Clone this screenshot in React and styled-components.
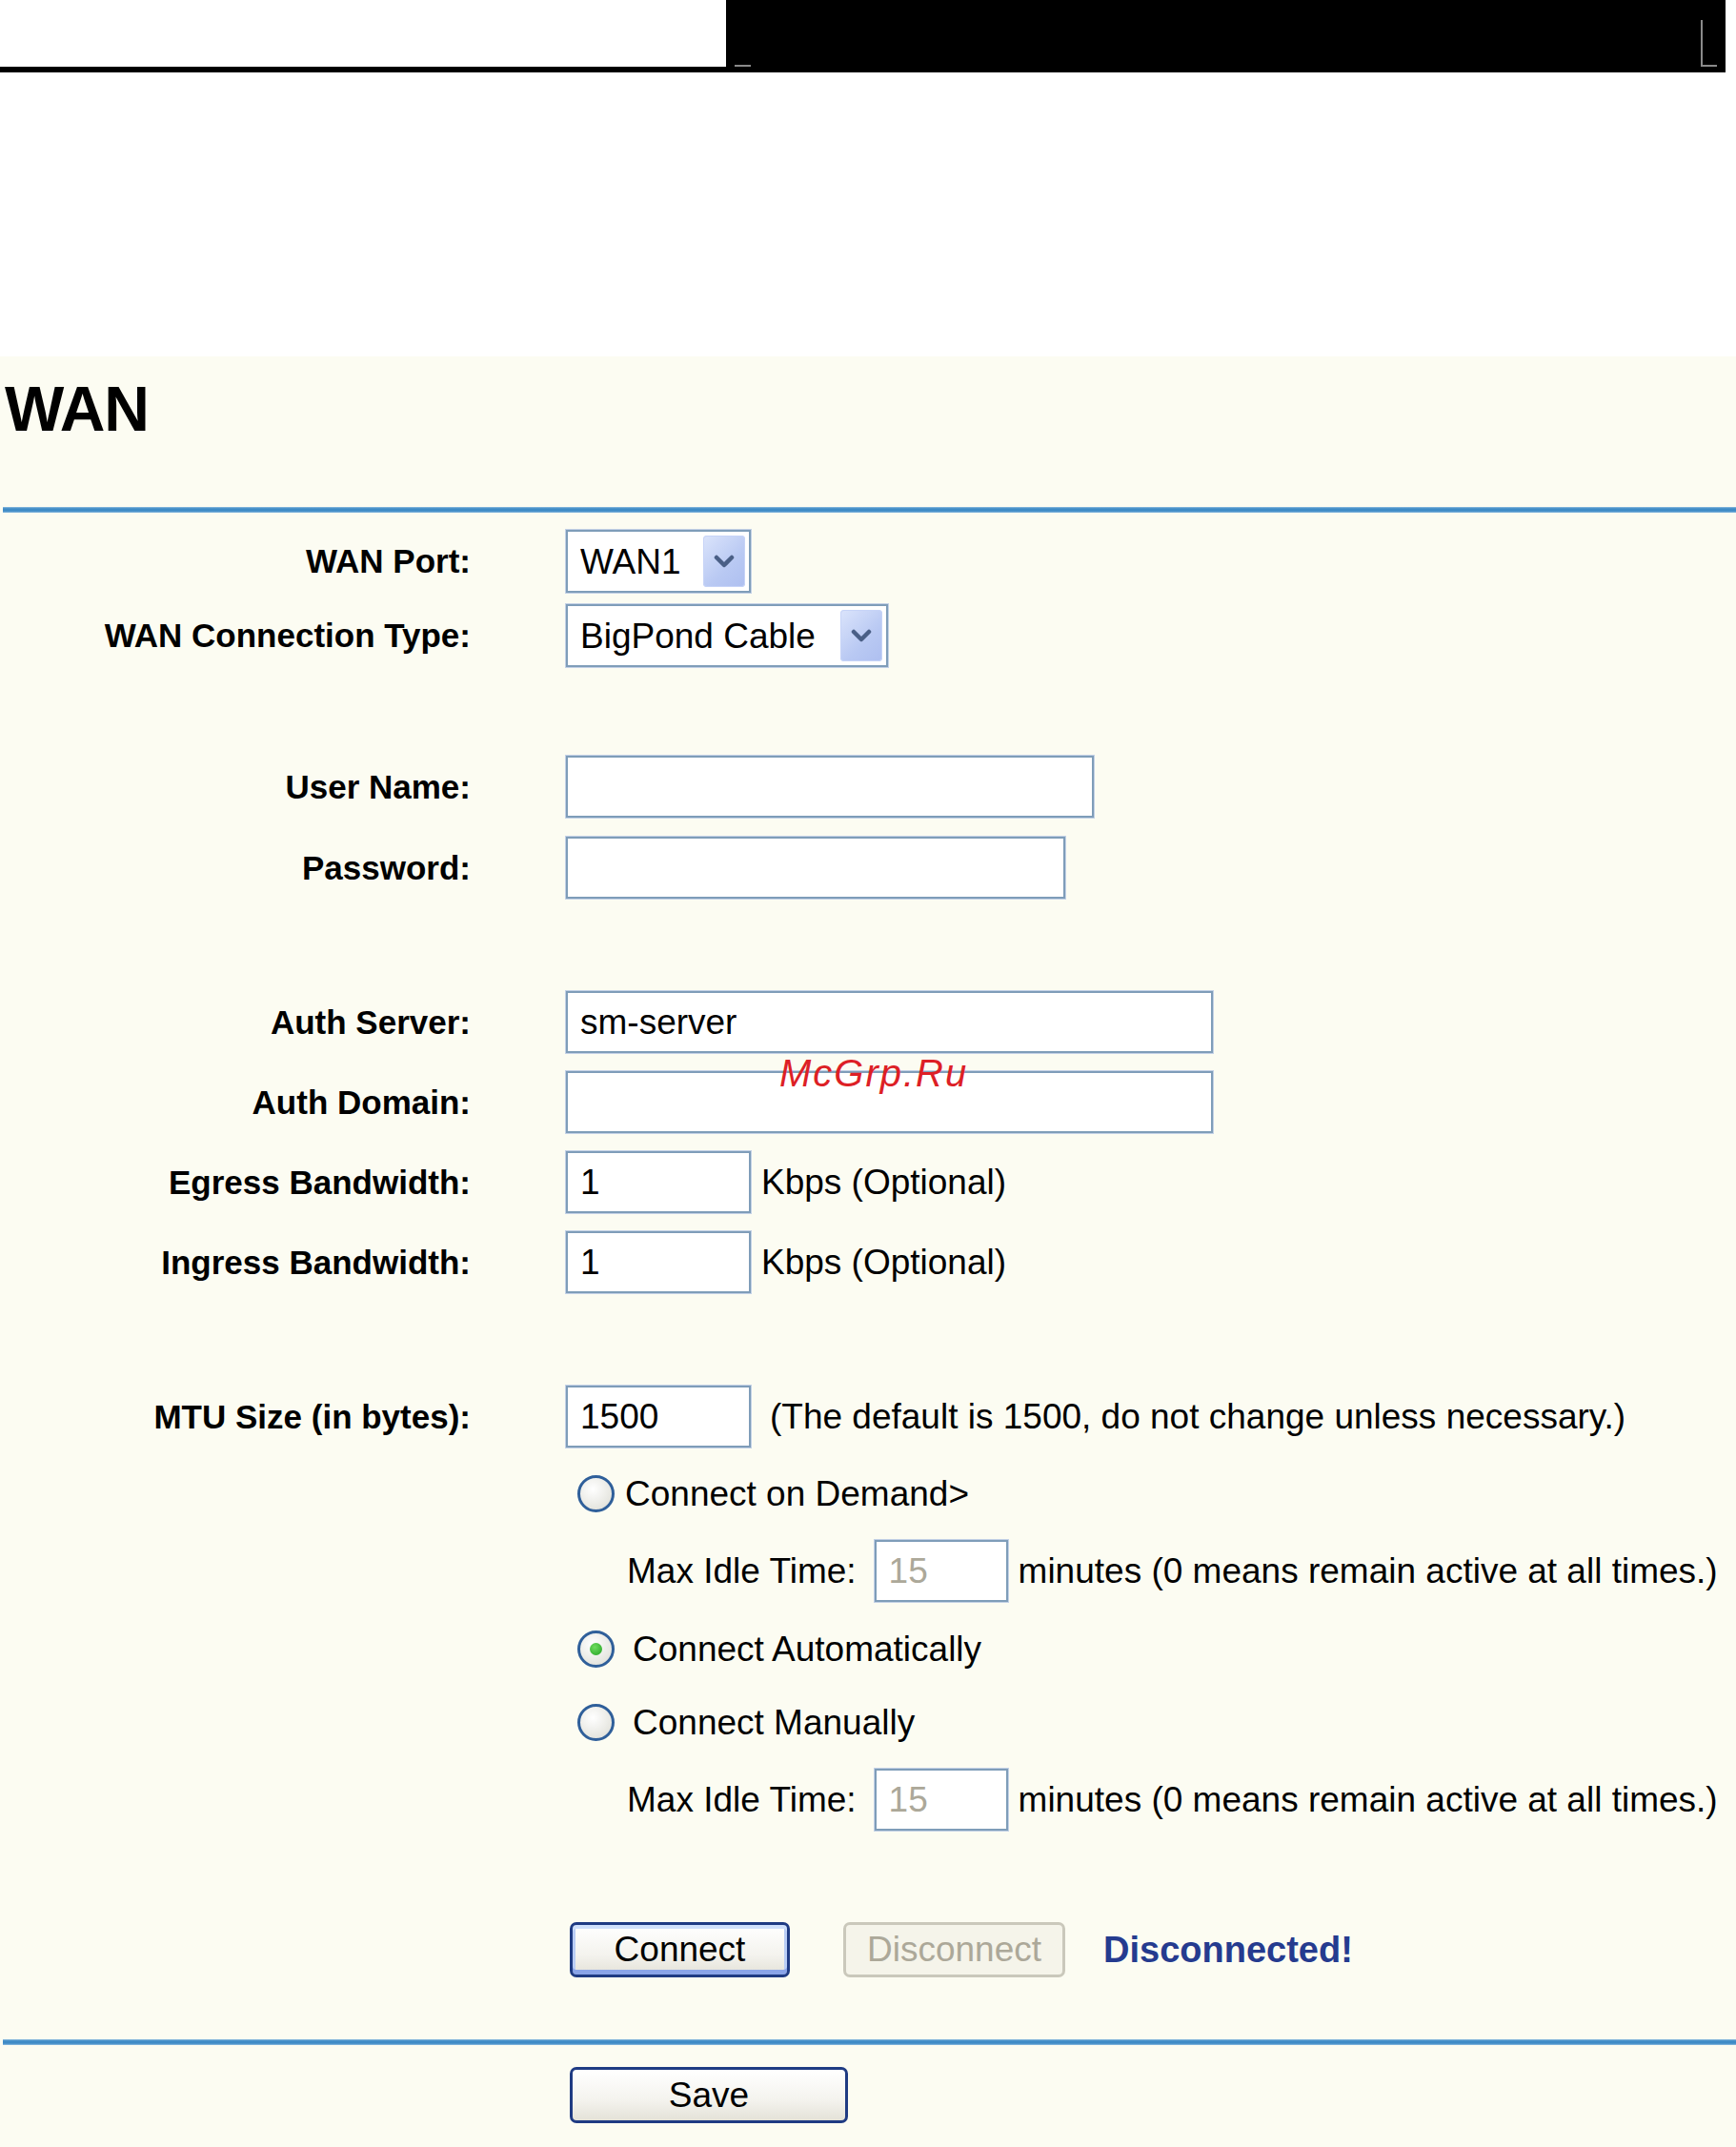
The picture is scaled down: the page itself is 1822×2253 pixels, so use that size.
import styled, { createGlobalStyle } from "styled-components";

const GlobalStyle = createGlobalStyle`
  html, body {
    margin: 0;
    padding: 0;
    background: #ffffff;
  }
  body {
    font-family: "Liberation Sans", Arial, sans-serif;
    color: #000;
  }
`;

const FONT = `"Liberation Sans", Arial, sans-serif`;

const Header = styled.header`
  display: flex;
  height: 76px;
`;

const HeaderLeft = styled.div`
  width: 762px;
  box-sizing: border-box;
  border-bottom: 6px solid #000;
`;

const HeaderBlack = styled.div`
  position: relative;
  width: 1049px;
  background: #000;
`;

const CornerMark = styled.span`
  position: absolute;
  background: #8a8a8a;
  left: ${(p) => p.$x}px;
  top: ${(p) => p.$y}px;
  width: ${(p) => p.$w}px;
  height: ${(p) => p.$h}px;
`;

const Panel = styled.main`
  position: relative;
  margin-top: 298px;
  background: #fcfcf2;
  min-height: 1879px;
  padding-top: 22px;
  box-sizing: border-box;
  overflow: hidden;
`;

const Title = styled.h1`
  margin: 0 0 0 5px;
  font-family: ${FONT};
  font-weight: bold;
  font-size: 66px;
  line-height: 66px;
  letter-spacing: -1px;
`;

const Divider = styled.hr`
  margin: ${(p) => p.$mt}px 0 0 3px;
  border: none;
  height: 6px;
  background: linear-gradient(#8fbde0, #3f8bc6 30%, #3f8bc6 70%, #8fbde0);
`;

const Row = styled.div`
  display: grid;
  grid-template-columns: 494px 1fr;
  column-gap: 100px;
  align-items: center;
  margin-top: ${(p) => p.$mt}px;
`;

const Label = styled.label`
  text-align: right;
  font-family: ${FONT};
  font-weight: bold;
  font-size: 35px;
  white-space: nowrap;
`;

const Control = styled.div`
  display: flex;
  align-items: center;
  gap: ${(p) => p.$gap ?? 11}px;
  padding-left: ${(p) => p.$indent ?? 0}px;
  font-family: ${FONT};
  font-size: 37px;
  line-height: 39px;
  white-space: nowrap;
`;

const TextInput = styled.input`
  width: ${(p) => p.$w}px;
  height: 65px;
  box-sizing: border-box;
  margin-left: ${(p) => p.$ml ?? 0}px;
  border: 2px solid #7f9db9;
  box-shadow: 0 0 0 1px #c3d1e6;
  background: #fff;
  padding: 0 13px;
  font-family: ${FONT};
  font-size: 37px;
  color: ${(p) => (p.$muted ? "#aca899" : "#000")};
  outline: none;
`;

const FauxSelect = styled.div`
  display: flex;
  align-items: center;
  justify-content: space-between;
  width: ${(p) => p.$w}px;
  height: 66px;
  box-sizing: border-box;
  border: 2px solid #7f9db9;
  box-shadow: 0 0 0 1px #c3d1e6;
  background: #fff;
  padding: 0 4px 0 13px;
  font-family: ${FONT};
  font-size: 37px;
`;

const ArrowBtn = styled.span`
  display: flex;
  align-items: center;
  justify-content: center;
  width: 44px;
  height: 54px;
  border-radius: 4px;
  background: linear-gradient(135deg, #dbe4fb, #b9c9f3 60%, #aebff0);
  box-shadow: inset 0 0 0 1px #c7d4f7;
`;

const Note = styled.span`
  margin-left: ${(p) => p.$ml ?? 0}px;
`;

const Radio = styled.span`
  position: relative;
  display: inline-block;
  width: 39px;
  height: 39px;
  box-sizing: border-box;
  border-radius: 50%;
  border: 3px solid #2f5f9a;
  background: radial-gradient(circle at 40% 35%, #ffffff, #e6e6e0 70%, #d4d3cc);
  flex: none;

  &::after {
    content: "";
    display: ${(p) => (p.$checked ? "block" : "none")};
    position: absolute;
    left: 50%;
    top: 50%;
    width: 13px;
    height: 13px;
    margin: -6.5px 0 0 -6.5px;
    border-radius: 50%;
    background: radial-gradient(circle at 40% 35%, #6fdc5f, #21a121);
  }
`;

const ButtonBar = styled.div`
  display: flex;
  align-items: center;
  padding-left: 4px;
`;

const XpButton = styled.button`
  width: ${(p) => p.$w}px;
  height: ${(p) => p.$h ?? 58}px;
  box-sizing: border-box;
  border-radius: 7px;
  font-family: ${FONT};
  font-size: 37px;
  padding: 0;
  margin-right: ${(p) => p.$mr ?? 0}px;
  border: 3px solid ${(p) => (p.$disabled ? "#cac8bb" : "#1f3b83")};
  color: ${(p) => (p.$disabled ? "#aca899" : "#000")};
  background: ${(p) =>
    p.$disabled ? "#f5f4ea" : "linear-gradient(#ffffff, #f4f3ee 60%, #e4e2d8)"};
  box-shadow: ${(p) =>
    p.$focus
      ? "inset 0 4px 0 #cfe0fb, inset 0 -5px 0 #8aa4e8, inset 3px 0 0 #b9cdf5, inset -3px 0 0 #b9cdf5"
      : "none"};
`;

const Status = styled.span`
  font-family: ${FONT};
  font-weight: bold;
  font-size: 38px;
  color: #253b8f;
`;

const Watermark = styled.span`
  position: absolute;
  left: 818px;
  top: 732px;
  font-family: ${FONT};
  font-style: italic;
  font-size: 40px;
  line-height: 40px;
  letter-spacing: 2px;
  color: #dd1f26;
  pointer-events: none;
`;

const Chevron = () => (
  <svg width="22" height="16" viewBox="0 0 22 16">
    <polyline
      points="3,4 11,12 19,4"
      fill="none"
      stroke="#4a5f86"
      strokeWidth="4.5"
      strokeLinecap="round"
      strokeLinejoin="round"
    />
  </svg>
);

const Select = ({ value, width }) => (
  <FauxSelect $w={width}>
    <span>{value}</span>
    <ArrowBtn>
      <Chevron />
    </ArrowBtn>
  </FauxSelect>
);

const Empty = () => <span />;

const IdleRow = ({ mt }) => (
  <Row $mt={mt}>
    <Empty />
    <Control $indent={64} $gap={11}>
      <Note>Max Idle Time:</Note>
      <TextInput $w={140} $ml={8} $muted defaultValue="15" />
      <Note>minutes (0 means remain active at all times.)</Note>
    </Control>
  </Row>
);

const App = () => {
  return (
    <>
      <GlobalStyle />
      <Header>
        <HeaderLeft />
        <HeaderBlack>
          <CornerMark $x={9} $y={68} $w={17} $h={2} />
          <CornerMark $x={1023} $y={21} $w={2} $h={49} />
          <CornerMark $x={1023} $y={68} $w={17} $h={2} />
        </HeaderBlack>
      </Header>

      <Panel>
        <Title>WAN</Title>
        <Divider $mt={70} />

        <Row $mt={18}>
          <Label>WAN Port:</Label>
          <Control>
            <Select value="WAN1" width={194} />
          </Control>
        </Row>
        <Row $mt={12}>
          <Label>WAN Connection Type:</Label>
          <Control>
            <Select value="BigPond Cable" width={338} />
          </Control>
        </Row>

        <Row $mt={93}>
          <Label>User Name:</Label>
          <Control>
            <TextInput $w={554} defaultValue="" />
          </Control>
        </Row>
        <Row $mt={20}>
          <Label>Password:</Label>
          <Control>
            <TextInput $w={524} type="password" defaultValue="" />
          </Control>
        </Row>

        <Row $mt={97}>
          <Label>Auth Server:</Label>
          <Control>
            <TextInput $w={679} defaultValue="sm-server" />
          </Control>
        </Row>
        <Row $mt={19}>
          <Label>Auth Domain:</Label>
          <Control>
            <TextInput $w={679} defaultValue="" />
          </Control>
        </Row>
        <Row $mt={19}>
          <Label>Egress Bandwidth:</Label>
          <Control>
            <TextInput $w={194} defaultValue="1" />
            <Note>Kbps (Optional)</Note>
          </Control>
        </Row>
        <Row $mt={19}>
          <Label>Ingress Bandwidth:</Label>
          <Control>
            <TextInput $w={194} defaultValue="1" />
            <Note>Kbps (Optional)</Note>
          </Control>
        </Row>

        <Row $mt={97}>
          <Label>MTU Size (in bytes):</Label>
          <Control $gap={20}>
            <TextInput $w={194} defaultValue="1500" />
            <Note>(The default is 1500, do not change unless necessary.)</Note>
          </Control>
        </Row>

        <Row $mt={29}>
          <Empty />
          <Control $indent={12} $gap={11}>
            <Radio />
            <Note>Connect on Demand&gt;</Note>
          </Control>
        </Row>
        <IdleRow mt={29} />
        <Row $mt={30}>
          <Empty />
          <Control $indent={12} $gap={19}>
            <Radio $checked />
            <Note>Connect Automatically</Note>
          </Control>
        </Row>
        <Row $mt={38}>
          <Empty />
          <Control $indent={12} $gap={19}>
            <Radio />
            <Note>Connect Manually</Note>
          </Control>
        </Row>
        <IdleRow mt={29} />

        <Row $mt={96}>
          <Empty />
          <ButtonBar>
            <XpButton $w={231} $focus $mr={56}>
              Connect
            </XpButton>
            <XpButton $w={233} $disabled $mr={40} disabled>
              Disconnect
            </XpButton>
            <Status>Disconnected!</Status>
          </ButtonBar>
        </Row>

        <Divider $mt={65} />

        <Row $mt={23}>
          <Empty />
          <ButtonBar>
            <XpButton $w={292} $h={59}>
              Save
            </XpButton>
          </ButtonBar>
        </Row>

        <Watermark>McGrp.Ru</Watermark>
      </Panel>
    </>
  );
};

export default App;
